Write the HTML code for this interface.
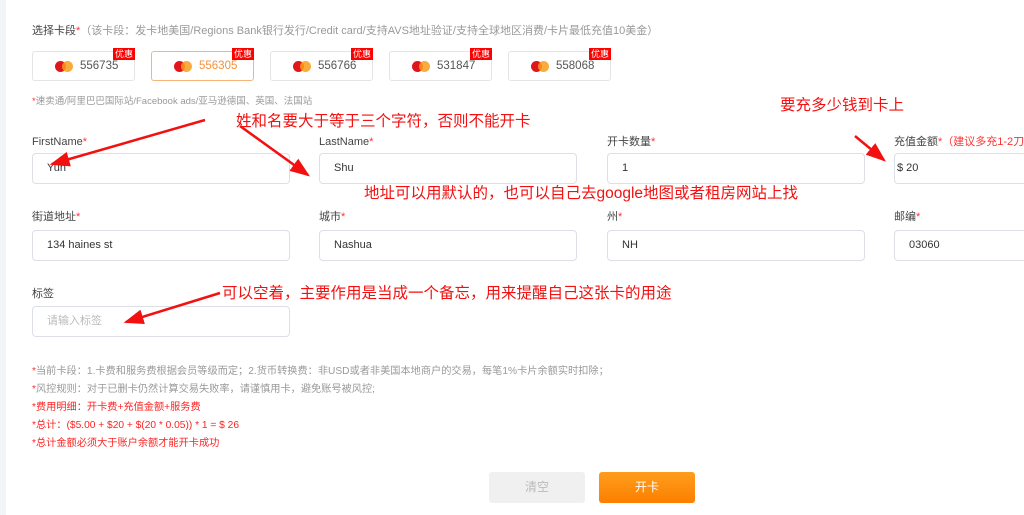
<!DOCTYPE html>
<html><head><meta charset="utf-8"><style>
*{box-sizing:border-box;margin:0;padding:0}
body{width:1024px;height:515px;overflow:hidden;background:#fff;font-family:"Liberation Sans","Noto Sans CJK SC",sans-serif;position:relative;color:#333}
.a{position:absolute;white-space:nowrap}
.lbl{font-size:11px;color:#444;line-height:13px}
.st{color:#f33}
.inp{position:absolute;border:1px solid #dcdfe6;border-radius:4px;height:31px;width:258px;font-size:11px;color:#333;line-height:29px;padding-left:14px}
.card{position:absolute;top:51px;width:103px;height:30px;border:1px solid #e4e4e4;border-radius:3px;font-size:11.5px;color:#555;line-height:29px;padding-left:47px}
.card .mc1,.card .mc2{position:absolute;top:9px;width:11px;height:11px;border-radius:50%}
.card .mc1{left:22px;background:#e0161d}
.card .mc2{left:29px;background:#f99c1c;opacity:.85}
.card .tag{position:absolute;right:-1px;top:-4px;background:#f00;color:#fff;font-size:9px;line-height:12px;padding:0 2px}
.ann{color:#f31010;font-size:15.5px;line-height:18px}
.note{font-size:10.2px;color:#999;line-height:12px}
.red{color:#f22}
</style></head><body>
<div class="a" style="left:0;top:0;width:6px;height:515px;background:#f3f4f8"></div>
<div class="a lbl" style="left:32px;top:25px">选择卡段<span class="st">*</span><span style="color:#999">（该卡段：发卡地美国/Regions Bank银行发行/Credit card/支持AVS地址验证/支持全球地区消费/卡片最低充值10美金）</span></div>
<div class="card" style="left:32px"><i class="mc1"></i><i class="mc2"></i>556735<span class="tag">优惠</span></div>
<div class="card" style="left:151px;border-color:#f5b57a;color:#f5913a"><i class="mc1"></i><i class="mc2"></i>556305<span class="tag">优惠</span></div>
<div class="card" style="left:270px"><i class="mc1"></i><i class="mc2"></i>556766<span class="tag">优惠</span></div>
<div class="card" style="left:389px"><i class="mc1"></i><i class="mc2"></i>531847<span class="tag">优惠</span></div>
<div class="card" style="left:508px"><i class="mc1"></i><i class="mc2"></i>558068<span class="tag">优惠</span></div>
<div class="a" style="left:32px;top:93px;font-size:9.5px;color:#999"><span class="st">*</span>速卖通/阿里巴巴国际站/Facebook ads/亚马逊德国、英国、法国站</div>

<div class="a lbl" style="left:32px;top:136px">FirstName<span class="st">*</span></div>
<div class="a lbl" style="left:319px;top:136px">LastName<span class="st">*</span></div>
<div class="a lbl" style="left:607px;top:136px">开卡数量<span class="st">*</span></div>
<div class="a lbl" style="left:894px;top:136px">充值金额<span class="st">*</span><span class="st">（建议多充1-2刀）</span></div>
<div class="inp" style="left:32px;top:153px">Yun</div>
<div class="inp" style="left:319px;top:153px">Shu</div>
<div class="inp" style="left:607px;top:153px">1</div>
<div class="inp" style="left:894px;top:153px;padding-left:2px">$ 20</div>

<div class="a lbl" style="left:32px;top:211px">街道地址<span class="st">*</span></div>
<div class="a lbl" style="left:319px;top:211px">城市<span class="st">*</span></div>
<div class="a lbl" style="left:607px;top:211px">州<span class="st">*</span></div>
<div class="a lbl" style="left:894px;top:211px">邮编<span class="st">*</span></div>
<div class="inp" style="left:32px;top:230px">134 haines st</div>
<div class="inp" style="left:319px;top:230px">Nashua</div>
<div class="inp" style="left:607px;top:230px">NH</div>
<div class="inp" style="left:894px;top:230px">03060</div>

<div class="a lbl" style="left:32px;top:288px">标签</div>
<div class="inp" style="left:32px;top:306px;color:#bbb">请输入标签</div>

<div class="a ann" style="left:236px;top:113px">姓和名要大于等于三个字符，否则不能开卡</div>
<div class="a ann" style="left:780px;top:97px">要充多少钱到卡上</div>
<div class="a ann" style="left:364px;top:185px">地址可以用默认的，也可以自己去google地图或者租房网站上找</div>
<div class="a ann" style="left:222px;top:285px">可以空着，主要作用是当成一个备忘，用来提醒自己这张卡的用途</div>

<svg class="a" style="left:0;top:0" width="1024" height="515">
<defs><marker id="h" markerWidth="8" markerHeight="6" refX="7" refY="3" orient="auto"><path d="M0,0L8,3L0,6z" fill="#f31010"/></marker></defs>
<g stroke="#f31010" stroke-width="2.5" fill="none" marker-end="url(#h)">
<line x1="205" y1="120" x2="52" y2="164"/>
<line x1="240" y1="126" x2="308" y2="175"/>
<line x1="855" y1="136" x2="884" y2="160"/>
<line x1="220" y1="293" x2="126" y2="322"/>
</g></svg>

<div class="a note" style="left:32px;top:366px"><span class="st">*</span>当前卡段：1.卡费和服务费根据会员等级而定；2.货币转换费：非USD或者非美国本地商户的交易，每笔1%卡片余额实时扣除；</div>
<div class="a note" style="left:32px;top:384px"><span class="st">*</span>风控规则：对于已删卡仍然计算交易失败率，请谨慎用卡，避免账号被风控;</div>
<div class="a note red" style="left:32px;top:402px">*费用明细：开卡费+充值金额+服务费</div>
<div class="a note red" style="left:32px;top:420px">*总计：($5.00 + $20 + $(20 * 0.05)) * 1 = $ 26</div>
<div class="a note red" style="left:32px;top:438px">*总计金额必须大于账户余额才能开卡成功</div>

<div class="a" style="left:489px;top:472px;width:96px;height:31px;background:#f0f0f0;border-radius:3px;color:#bbb;font-size:12px;text-align:center;line-height:31px">清空</div>
<div class="a" style="left:599px;top:472px;width:96px;height:31px;background:linear-gradient(#ff9d1c,#fc7f00);border-radius:3px;color:#fff;font-size:12px;text-align:center;line-height:31px">开卡</div>
</body></html>
